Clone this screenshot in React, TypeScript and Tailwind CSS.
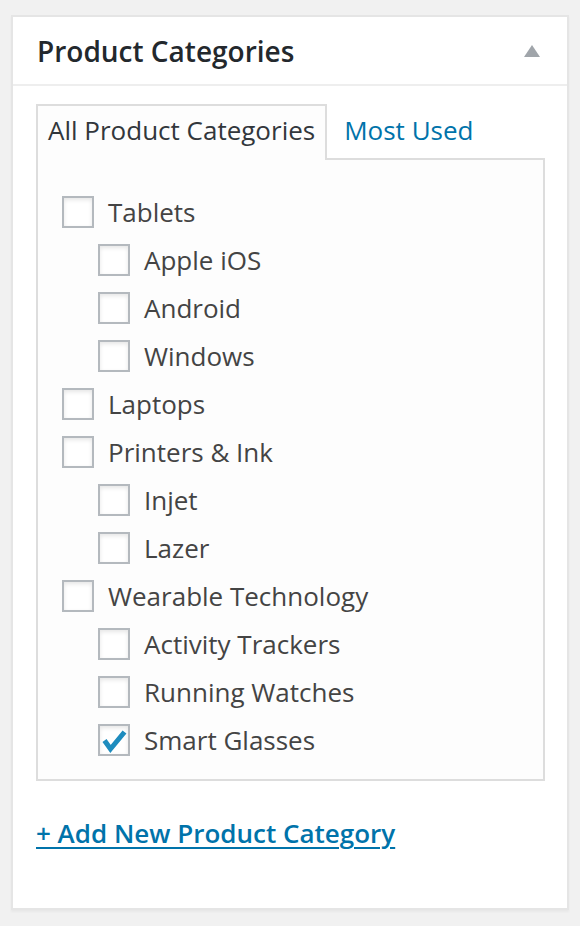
import React from 'react';

type Category = {
  name: string;
  checked?: boolean;
  children?: Category[];
};

const categories: Category[] = [
  { name: 'Tablets', children: [{ name: 'Apple iOS' }, { name: 'Android' }, { name: 'Windows' }] },
  { name: 'Laptops' },
  { name: 'Printers & Ink', children: [{ name: 'Injet' }, { name: 'Lazer' }] },
  {
    name: 'Wearable Technology',
    children: [{ name: 'Activity Trackers' }, { name: 'Running Watches' }, { name: 'Smart Glasses', checked: true }],
  },
];

const Checkbox: React.FC<{ checked?: boolean }> = ({ checked }) => (
  <span className="flex h-[32px] w-[32px] shrink-0 items-center justify-center border-2 border-[#b4b9be] bg-white shadow-[inset_0_2px_4px_rgba(0,0,0,0.1)]">
    {checked && (
      <svg width="28" height="28" viewBox="0 0 28 28" className="-ml-[1px]">
        <path d="M4.5 14.5 L10.5 23 L24.5 6" fill="none" stroke="#1e8cbe" strokeWidth="5" strokeLinejoin="miter" />
      </svg>
    )}
  </span>
);

const Row: React.FC<{ item: Category; child?: boolean }> = ({ item, child }) => (
  <li className={`flex h-[48px] items-center gap-[14px] ${child ? 'ml-[36px]' : ''}`}>
    <Checkbox checked={item.checked} />
    <span className="text-[26px] leading-[36px] text-[#444]">{item.name}</span>
  </li>
);

const App: React.FC = () => {
  return (
    <div
      className="min-h-[926px] bg-[#f1f1f1] pl-[11px] pt-[15px]"
      style={{ fontFamily: '"Open Sans", "Noto Sans", sans-serif' }}
    >
      <div className="w-[558px] border-2 border-[#e5e5e5] bg-white shadow-[0_2px_2px_rgba(0,0,0,0.04)]">
        {/* header */}
        <div className="flex h-[69px] items-center justify-between border-b-2 border-[#eeeeee] pl-[24px] pr-[27px]">
          <h2 className="text-[28px] font-semibold leading-[36px] text-[#23282d]">Product Categories</h2>
          <svg width="16" height="12" viewBox="0 0 16 12">
            <path d="M8 0 L16 12 L0 12 Z" fill="#a0a5aa" />
          </svg>
        </div>

        <div className="px-[23px] pb-[57px] pt-[18px]">
          {/* tabs */}
          <div className="flex items-start">
            <div className="relative z-10 -mb-[2px] border-x-2 border-t-2 border-[#dddddd] bg-[#fdfdfd] px-[10px] pb-[12px] pt-[6px]">
              <span className="text-[26px] leading-[36px] text-[#32373c]">All Product Categories</span>
            </div>
            <div className="pl-[17px] pt-[8px]">
              <span className="text-[26px] leading-[36px] text-[#0073aa]">Most Used</span>
            </div>
          </div>

          {/* panel */}
          <div className="w-[509px] border-2 border-[#dddddd] bg-[#fdfdfd] pb-[15px] pl-[24px] pt-[28px]">
            <ul>
              {categories.map((cat) => (
                <React.Fragment key={cat.name}>
                  <Row item={cat} />
                  {cat.children?.map((c) => (
                    <Row key={c.name} item={c} child />
                  ))}
                </React.Fragment>
              ))}
            </ul>
          </div>

          <div className="mt-[34px]">
            <a href="#" className="text-[26px] font-semibold leading-[36px] text-[#0073aa] underline underline-offset-[4px] decoration-2">
              + Add New Product Category
            </a>
          </div>
        </div>
      </div>
    </div>
  );
};

export default App;
